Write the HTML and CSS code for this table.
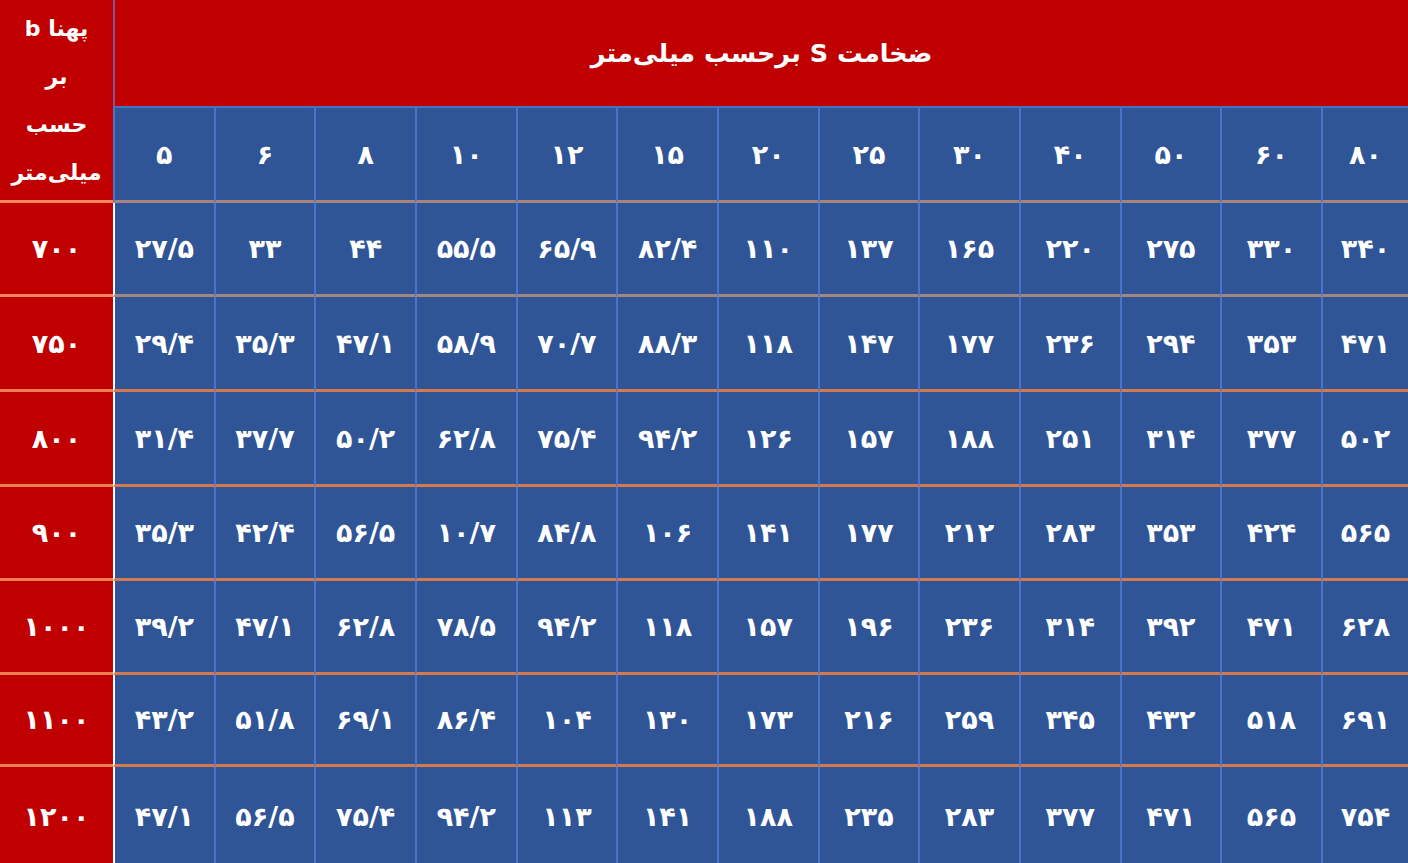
FILE: index.html
```html
<!DOCTYPE html>
<html lang="fa">
<head>
<meta charset="utf-8">
<title>جدول وزن ورق</title>
<link rel="stylesheet" href="styles.css">
</head>
<body>
<div class="sheet">
  <div class="corner"><span>پهنا b</span><span>بر</span><span>حسب</span><span>میلی‌متر</span></div>
  <div class="title">ضخامت S برحسب میلی‌متر</div>

  <div class="th">۵</div><div class="th">۶</div><div class="th">۸</div><div class="th">۱۰</div><div class="th">۱۲</div><div class="th">۱۵</div><div class="th">۲۰</div><div class="th">۲۵</div><div class="th">۳۰</div><div class="th">۴۰</div><div class="th">۵۰</div><div class="th">۶۰</div><div class="th">۸۰</div>

  <div class="rh r1">۷۰۰</div>
  <div class="cell r1">۲۷/۵</div><div class="cell r1">۳۳</div><div class="cell r1">۴۴</div><div class="cell r1">۵۵/۵</div><div class="cell r1">۶۵/۹</div><div class="cell r1">۸۲/۴</div><div class="cell r1">۱۱۰</div><div class="cell r1">۱۳۷</div><div class="cell r1">۱۶۵</div><div class="cell r1">۲۲۰</div><div class="cell r1">۲۷۵</div><div class="cell r1">۳۳۰</div><div class="cell r1">۳۴۰</div>

  <div class="rh">۷۵۰</div>
  <div class="cell">۲۹/۴</div><div class="cell">۳۵/۳</div><div class="cell">۴۷/۱</div><div class="cell">۵۸/۹</div><div class="cell">۷۰/۷</div><div class="cell">۸۸/۳</div><div class="cell">۱۱۸</div><div class="cell">۱۴۷</div><div class="cell">۱۷۷</div><div class="cell">۲۳۶</div><div class="cell">۲۹۴</div><div class="cell">۳۵۳</div><div class="cell">۴۷۱</div>

  <div class="rh">۸۰۰</div>
  <div class="cell">۳۱/۴</div><div class="cell">۳۷/۷</div><div class="cell">۵۰/۲</div><div class="cell">۶۲/۸</div><div class="cell">۷۵/۴</div><div class="cell">۹۴/۲</div><div class="cell">۱۲۶</div><div class="cell">۱۵۷</div><div class="cell">۱۸۸</div><div class="cell">۲۵۱</div><div class="cell">۳۱۴</div><div class="cell">۳۷۷</div><div class="cell">۵۰۲</div>

  <div class="rh">۹۰۰</div>
  <div class="cell">۳۵/۳</div><div class="cell">۴۲/۴</div><div class="cell">۵۶/۵</div><div class="cell">۱۰/۷</div><div class="cell">۸۴/۸</div><div class="cell">۱۰۶</div><div class="cell">۱۴۱</div><div class="cell">۱۷۷</div><div class="cell">۲۱۲</div><div class="cell">۲۸۳</div><div class="cell">۳۵۳</div><div class="cell">۴۲۴</div><div class="cell">۵۶۵</div>

  <div class="rh">۱۰۰۰</div>
  <div class="cell">۳۹/۲</div><div class="cell">۴۷/۱</div><div class="cell">۶۲/۸</div><div class="cell">۷۸/۵</div><div class="cell">۹۴/۲</div><div class="cell">۱۱۸</div><div class="cell">۱۵۷</div><div class="cell">۱۹۶</div><div class="cell">۲۳۶</div><div class="cell">۳۱۴</div><div class="cell">۳۹۲</div><div class="cell">۴۷۱</div><div class="cell">۶۲۸</div>

  <div class="rh">۱۱۰۰</div>
  <div class="cell">۴۳/۲</div><div class="cell">۵۱/۸</div><div class="cell">۶۹/۱</div><div class="cell">۸۶/۴</div><div class="cell">۱۰۴</div><div class="cell">۱۳۰</div><div class="cell">۱۷۳</div><div class="cell">۲۱۶</div><div class="cell">۲۵۹</div><div class="cell">۳۴۵</div><div class="cell">۴۳۲</div><div class="cell">۵۱۸</div><div class="cell">۶۹۱</div>

  <div class="rh last">۱۲۰۰</div>
  <div class="cell last">۴۷/۱</div><div class="cell last">۵۶/۵</div><div class="cell last">۷۵/۴</div><div class="cell last">۹۴/۲</div><div class="cell last">۱۱۳</div><div class="cell last">۱۴۱</div><div class="cell last">۱۸۸</div><div class="cell last">۲۳۵</div><div class="cell last">۲۸۳</div><div class="cell last">۳۷۷</div><div class="cell last">۴۷۱</div><div class="cell last">۵۶۵</div><div class="cell last">۷۵۴</div>
</div>
</body>
</html>
```

FILE: styles.css
```css
* { box-sizing: border-box; }
html, body {
  margin: 0;
  padding: 0;
  width: 1408px;
  height: 863px;
  overflow: hidden;
  background: #2f5597;
}
.sheet {
  display: grid;
  grid-template-columns: 113px repeat(12, 100.67px) 1fr;
  grid-template-rows: 108px 95px 94px 95px 95px 94px 94px 92px 98px;
  font-family: "DejaVu Sans", sans-serif;
  font-weight: bold;
  color: #ffffff;
}
.corner {
  grid-row: 1 / 3;
  grid-column: 1;
  background: #c00000;
  border-bottom: 3px solid #f4845f;
  display: flex;
  flex-direction: column;
  align-items: center;
  justify-content: center;
  font-size: 22px;
  line-height: 48px;
  direction: rtl;
  padding-top: 2px;
}
.title {
  grid-row: 1;
  grid-column: 2 / 15;
  background: #c00000;
  border-left: 2px solid #7a5a9e;
  border-bottom: 2px solid #4472c4;
  display: flex;
  align-items: center;
  justify-content: center;
  font-size: 25.5px;
  direction: rtl;
}
.th, .cell, .rh {
  display: flex;
  align-items: center;
  justify-content: center;
  font-size: 27px;
  direction: ltr;
}
.th {
  background: #2f5597;
  border-left: 2px solid #4775cc;
  border-bottom: 3px solid #a6857e;
}
.rh {
  background: #c00000;
  border-bottom: 3px solid #f07e52;
}
.cell {
  background: #2f5597;
  border-left: 2px solid #4775cc;
  border-bottom: 3px solid #d57a4c;
}
.rh + .cell { border-left-color: #ffffff; }
.cell.r1 { border-bottom-color: #a6857e; }
.rh.r1 { border-bottom-color: #f4845f; }
.rh.last, .cell.last { border-bottom: none; }
```
